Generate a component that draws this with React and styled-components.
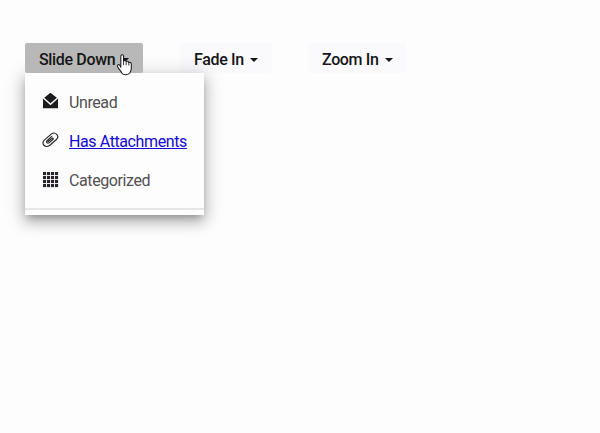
import React from "react";
import styled, { createGlobalStyle } from "styled-components";

const GlobalStyle = createGlobalStyle`
  body {
    margin: 0;
    background: #fefdfe;
    font-family: Roboto, "Liberation Sans", sans-serif;
  }
`;

const Toolbar = styled.div`
  box-sizing: border-box;
  min-height: 433px;
  display: flex;
  align-items: flex-start;
  gap: 37px;
  padding: 43px 25px 0;
`;

const Anchor = styled.div`
  position: relative;
  margin-right: ${(p) => (p.$pull ? `-${p.$pull}px` : "0")};
`;

const Button = styled.button`
  position: relative;
  z-index: ${(p) => (p.$active ? 2 : 0)};
  box-sizing: border-box;
  display: flex;
  align-items: center;
  gap: 6px;
  width: ${(p) => p.$width}px;
  height: 30px;
  padding: 3px 0 0 14px;
  border: 0;
  border-radius: 2px;
  background: ${(p) => (p.$active ? "#b9b8b9" : "#faf9fb")};
  color: #151515;
  font: 500 16px/20px Roboto, "Liberation Sans", sans-serif;
  letter-spacing: -0.35px;
  white-space: nowrap;
`;

const Caret = styled.span`
  border: 4px solid transparent;
  border-top-color: #151515;
  border-bottom: 0;
`;

const Pointer = styled.svg`
  position: absolute;
  z-index: 3;
  left: 91px;
  top: 11px;
  width: 17px;
  height: 22px;
`;

const Menu = styled.ul`
  position: absolute;
  z-index: 1;
  left: 0;
  top: 30px;
  box-sizing: border-box;
  width: 179px;
  height: 142px;
  margin: 0;
  padding: 9px 0 0;
  list-style: none;
  background: #fefdfe;
  box-shadow: 0 5px 7px -3px rgba(0, 0, 0, 0.22),
    0 7px 12px 1px rgba(0, 0, 0, 0.17), 0 3px 18px 2px rgba(0, 0, 0, 0.17);
`;

const Item = styled.li`
  display: flex;
  align-items: center;
  gap: 10px;
  height: 39.3px;
  padding-left: 17px;
  color: #505050;
  font-size: 16px;
  line-height: 20px;
  letter-spacing: -0.4px;
`;

const Icon = styled.svg`
  flex: none;
  width: 17px;
  height: 18px;
  margin-top: -2px;
`;

const Label = styled.span`
  padding-top: 2px;
`;

const Link = styled.a`
  padding-top: 2px;
  color: #1208d8;
  text-decoration: underline;
`;

const Divider = styled.li`
  height: 2px;
  margin-top: 8px;
  background: #e8e7e8;
`;

function EnvelopeIcon() {
  return (
    <Icon viewBox="0 0 17 18" fill="#1b1b1e">
      <path d="M8.5 .8 14.8 5.7 8.5 11.3 2.2 5.7Z" />
      <path d="M1 6.6 8.5 13.2 16 6.6V16.2H1Z" />
    </Icon>
  );
}

function ClipIcon() {
  return (
    <Icon viewBox="0 0 17 18" fill="none" stroke="#242424" strokeWidth="1.15" strokeLinecap="round">
      <path d="M6.2 10.5 9.9 7.4C10.9 6.6 11.8 7.7 10.9 8.5L7.3 11.6C5.4 13.1 3.7 11 5.3 9.5L9.8 5.4M2.3 9.1 9.2 3.1C13.3 0 18 5 14.4 8.5L7.8 14.2C3.2 17.7-1.4 12.6 2.3 9.1Z" />
    </Icon>
  );
}

function GridIcon() {
  const cells = [0, 1, 2, 3];
  return (
    <Icon viewBox="0 0 17 18" fill="#26232a">
      {cells.map((row) =>
        cells.map((col) => (
          <rect key={`${row}-${col}`} x={1 + col * 4} y={2 + row * 4} width="3.1" height="3.1" />
        ))
      )}
    </Icon>
  );
}

export default function App() {
  return (
    <>
      <GlobalStyle />
      <Toolbar>
        <Anchor>
          <Button $width={118} $active>
            Slide Down
            <Caret />
          </Button>
          <Menu>
            <Item><EnvelopeIcon /><Label>Unread</Label></Item>
            <Item><ClipIcon /><Link href="#attachments">Has Attachments</Link></Item>
            <Item><GridIcon /><Label>Categorized</Label></Item>
            <Divider />
          </Menu>
          <Pointer viewBox="0 0 16 21">
            <path
              d="M4.5 12.5V2.2C4.5.2 7.1.2 7.1 2.2V7C7.6 5.7 9.5 6 9.6 7.4 10.3 6.4 12 6.8 12.1 8.2 13.1 7.5 14.5 8.1 14.5 9.5V14C14.5 16 13.2 17.2 13 18.4 11.5 20.1 7.3 20.1 5.8 18.8 5.1 16.7 2.2 14.2 1.3 11.8.8 10.2 2.6 9.5 3.4 10.8Z"
              fill="#fff" stroke="#17171c" strokeWidth="1" strokeLinejoin="round"
            />
            <path d="M7.1 7V10.6M9.6 7.5V10.8M12.1 8.3V11" stroke="#17171c" strokeWidth=".8" fill="none" />
          </Pointer>
        </Anchor>
        <Anchor $pull={1}>
          <Button $width={92}>
            Fade In
            <Caret />
          </Button>
        </Anchor>
        <Anchor>
          <Button $width={98}>
            Zoom In
            <Caret />
          </Button>
        </Anchor>
      </Toolbar>
    </>
  );
}
